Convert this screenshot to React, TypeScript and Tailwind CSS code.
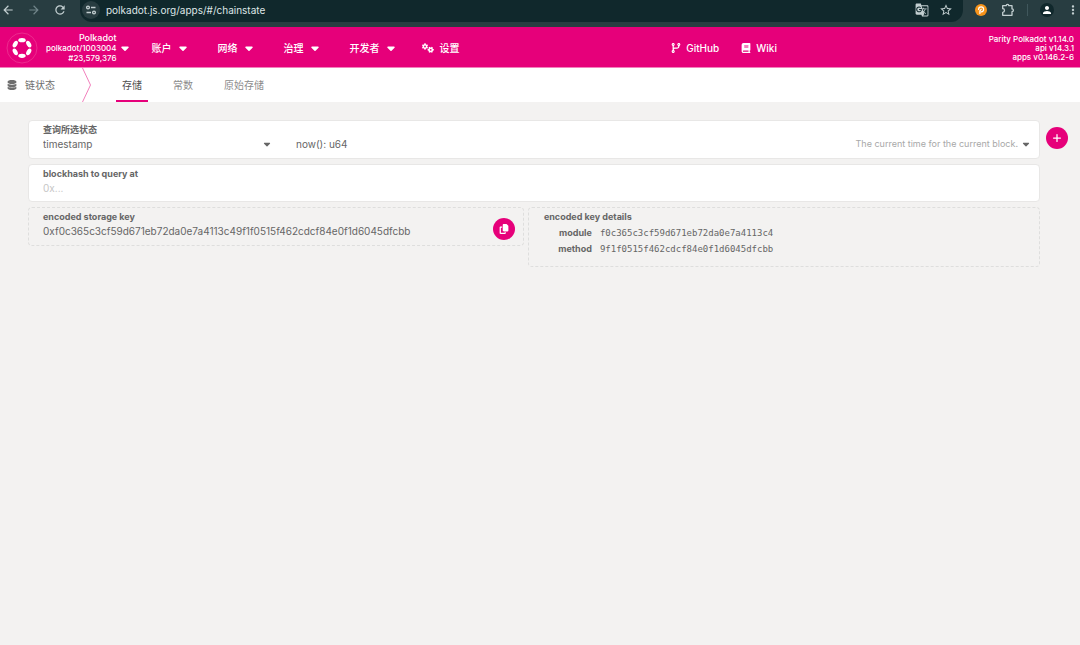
import { useState } from 'react';
import type { ReactNode } from 'react';
import { FaBook, FaCaretDown, FaCodeBranch, FaCopy, FaDatabase, FaGears, FaPlus } from 'react-icons/fa6';
import {
  MdArrowBack,
  MdArrowForward,
  MdGTranslate,
  MdMoreVert,
  MdPerson,
  MdRefresh,
  MdStarBorder,
} from 'react-icons/md';

const STORAGE_KEY = '0xf0c365c3cf59d671eb72da0e7a4113c49f1f0515f462cdcf84e0f1d6045dfcbb';

const MENUS = ['账户', '网络', '治理', '开发者'];
const TABS = ['存储', '常数', '原始存储'];

const KEY_DETAILS = [
  { name: 'module', value: 'f0c365c3cf59d671eb72da0e7a4113c4' },
  { name: 'method', value: '9f1f0515f462cdcf84e0f1d6045dfcbb' },
];

function TuneIcon() {
  return (
    <svg viewBox="0 0 12 12" className="size-3" fill="none" stroke="currentColor" strokeWidth="1.3">
      <circle cx="3" cy="3.5" r="1.4" />
      <path d="M6 3.5H10.500M1.500 8.5h4.5" />
      <circle cx="9" cy="8.5" r="1.4" />
    </svg>
  );
}

function PuzzleIcon() {
  return (
    <svg viewBox="0 0 14 14" className="size-3.5" fill="none" stroke="currentColor" strokeWidth="1.3" strokeLinejoin="round">
      <path d="M1.700 2.700H5.200a1.300 1.300 0 0 1 2.600 0H11v3.200a1.400 1.400 0 0 1 0 2.800V12.300H1.700V9.300a1.800 1.800 0 0 0 0-3.600z" />
    </svg>
  );
}

function WalletIcon() {
  return (
    <svg viewBox="0 0 12 12" className="size-3">
      <circle cx="6" cy="6" r="6" fill="#f7931a" />
      <path
        d="M3.600 5.400a2.500 2.500 0 1 1 2.600 2.500M4.900 9.500V6.800l1.300-1.500"
        fill="none"
        stroke="#fff"
        strokeWidth="1.200"
        strokeLinecap="round"
      />
    </svg>
  );
}

function PolkadotLogo() {
  const petals = [0, 60, 120, 180, 240, 300];

  return (
    <svg viewBox="0 0 32 32" className="size-8 shrink-0">
      <circle cx="16" cy="16" r="15" fill="none" stroke="#ee3d96" strokeWidth="0.7" />
      {petals.map((angle) => (
        <ellipse key={angle} cx="16" cy="8.2" rx="3.7" ry="2.1" fill="#fff" transform={`rotate(${angle} 16 16)`} />
      ))}
    </svg>
  );
}

function BrowserBar() {
  return (
    <div className="flex h-[27px] items-start bg-[#283d41] text-[#c3cfd1]">
      <div className="flex h-5 w-20 shrink-0 items-center gap-3 pl-px">
        <button type="button" aria-label="Back">
          <MdArrowBack className="size-3.5" />
        </button>
        <button type="button" aria-label="Forward" className="text-[#71858a]">
          <MdArrowForward className="size-3.5" />
        </button>
        <button type="button" aria-label="Reload">
          <MdRefresh className="size-3.5" />
        </button>
      </div>
      <div className="flex h-[22px] min-w-0 flex-1 items-center rounded-b-xl bg-[#10282c] px-0.5 pb-0.5">
        <button type="button" aria-label="Site information" className="flex size-[18px] items-center justify-center rounded-full bg-[#283d41]">
          <TuneIcon />
        </button>
        <input
          aria-label="Address"
          readOnly
          value="polkadot.js.org/apps/#/chainstate"
          className="ml-1.5 min-w-0 flex-1 bg-transparent text-[10px] text-[#dfe6e7] outline-none"
        />
        <button type="button" aria-label="Translate" className="mr-2.5">
          <MdGTranslate className="size-3.5" />
        </button>
        <button type="button" aria-label="Bookmark" className="mr-2">
          <MdStarBorder className="size-3.5" />
        </button>
      </div>
      <div className="flex h-5 shrink-0 items-center pl-3">
        <button type="button" aria-label="Wallet">
          <WalletIcon />
        </button>
        <button type="button" aria-label="Extensions" className="ml-3.5">
          <PuzzleIcon />
        </button>
        <span className="ml-3 h-3 w-px bg-[#40575c]" />
        <button type="button" aria-label="Profile" className="ml-3 flex size-3.5 items-center justify-center rounded-full bg-[#10282c] text-white">
          <MdPerson className="size-3" />
        </button>
        <button type="button" aria-label="Menu" className="ml-3">
          <MdMoreVert className="size-3.5" />
        </button>
      </div>
    </div>
  );
}

function Header() {
  return (
    <header className="flex h-[41px] items-center border-b border-[#f280bc] bg-[#e6007a] px-1.5 pt-0.5 text-white">
      <PolkadotLogo />
      <button type="button" className="ml-2 flex items-center gap-0.5 text-right text-[9px] leading-[10px]">
        <span>
          <span className="block font-medium">Polkadot</span>
          <span className="block text-[8px] font-medium">polkadot/1003004</span>
          <span className="block text-[8px] font-medium">#23,579,376</span>
        </span>
        <FaCaretDown className="size-3" />
      </button>
      <nav className="ml-[21px] flex items-center text-[10px] font-medium">
        {MENUS.map((menu) => (
          <button key={menu} type="button" className="mr-[29px] flex items-center gap-[5px]">
            {menu}
            <FaCaretDown className="size-3" />
          </button>
        ))}
        <a href="#/settings" className="-ml-1 flex items-center gap-1.5">
          <FaGears className="size-3" />
          设置
        </a>
      </nav>
      <nav className="mx-auto flex items-center gap-[22px] text-[10px] font-medium">
        <a href="#github" className="flex items-center gap-[5px]">
          <FaCodeBranch className="size-2.5" />
          GitHub
        </a>
        <a href="#wiki" className="flex items-center gap-[5px]">
          <FaBook className="size-2.5" />
          Wiki
        </a>
      </nav>
      <div className="text-right text-[8px] leading-[9px] font-medium">
        <div>Parity Polkadot v1.14.0</div>
        <div>api v14.3.1</div>
        <div>apps v0.146.2-6</div>
      </div>
    </header>
  );
}

interface TabsProps {
  active: string;
  onChange: (tab: string) => void;
}

function Tabs({ active, onChange }: TabsProps) {
  return (
    <nav className="flex h-[34px] items-stretch bg-white text-[10px] text-[#6e6e6e]">
      <div className="flex w-20 items-center gap-2 pl-[7px]">
        <FaDatabase className="size-2.5" />
        链状态
      </div>
      <svg viewBox="0 0 12 34" className="w-3 shrink-0" fill="none" stroke="#f280bc">
        <path d="M2.500 0L10.500 17L2.500 34" />
      </svg>
      <div className="ml-6 flex gap-[19px]">
        {TABS.map((tab) => (
          <button
            key={tab}
            type="button"
            onClick={() => onChange(tab)}
            className={
              tab === active
                ? 'border-y-2 border-t-transparent border-b-[#e6007a] px-1.5 text-[#4e4e4e]'
                : 'border-y-2 border-transparent px-1.5 text-[#8b8b8b]'
            }
          >
            {tab}
          </button>
        ))}
      </div>
    </nav>
  );
}

interface RoundButtonProps {
  label: string;
  children: ReactNode;
}

function RoundButton({ label, children }: RoundButtonProps) {
  return (
    <button
      type="button"
      aria-label={label}
      className="flex size-[22px] shrink-0 items-center justify-center rounded-full bg-[#e6007a] text-white"
    >
      {children}
    </button>
  );
}

/** Storage query form: pallet, entry and the optional block hash */
function QueryForm() {
  return (
    <div className="flex flex-col gap-[5px]">
      <div className="flex h-[39px] items-end rounded-sm border border-[#e8e7e6] bg-white pb-[7px] pl-3.5">
        <div className="w-[253px] shrink-0">
          <label htmlFor="pallet" className="block text-[9px] leading-[14px] font-bold">
            查询所选状态
          </label>
          <div className="flex items-center pr-6">
            <select id="pallet" className="h-[14px] flex-1 appearance-none text-[10px] leading-[14px] outline-none">
              <option>timestamp</option>
            </select>
            <FaCaretDown className="size-2.5" />
          </div>
        </div>
        <div className="flex flex-1 items-center pr-2">
          <select aria-label="storage entry" className="h-[14px] flex-1 appearance-none text-[10px] leading-[14px] outline-none">
            <option>now(): u64</option>
          </select>
          <span className="mr-[3px] text-[9px] leading-[14px] text-[#a8a8a8]">The current time for the current block.</span>
          <FaCaretDown className="size-2.5" />
        </div>
      </div>
      <div className="h-[38px] rounded-sm border border-[#e8e7e6] bg-white px-3.5 pt-0.5">
        <label htmlFor="blockhash" className="block text-[9px] leading-[14px] font-bold">
          blockhash to query at
        </label>
        <input
          id="blockhash"
          placeholder="0x..."
          className="block h-[14px] w-full text-[10px] leading-[14px] outline-none placeholder:text-[#c6c6c6]"
        />
      </div>
    </div>
  );
}

function EncodedKey() {
  return (
    <div className="mt-[5px] flex items-start gap-1">
      <div className="flex h-[39px] w-[49%] items-start rounded-sm border border-dashed border-[#dededd] pr-2 pl-3.5">
        <div className="min-w-0 flex-1 pt-0.5">
          <div className="text-[9px] leading-[14px] font-bold">encoded storage key</div>
          <div className="text-[10px] leading-[14px]">{STORAGE_KEY}</div>
        </div>
        <div className="pt-2.5">
          <RoundButton label="Copy storage key">
            <FaCopy className="size-2.5" />
          </RoundButton>
        </div>
      </div>
      <div className="h-[60px] flex-1 rounded-sm border border-dashed border-[#dededd] px-[15px] pt-0.5">
        <div className="text-[9px] leading-[14px] font-bold">encoded key details</div>
        <table className="mt-px leading-4">
          <tbody>
            {KEY_DETAILS.map((row) => (
              <tr key={row.name}>
                <th scope="row" className="w-12 p-0 text-right text-[9px] font-bold">
                  {row.name}
                </th>
                <td className="p-0 pl-2 font-['DejaVu_Sans_Mono',monospace] text-[9px]">{row.value}</td>
              </tr>
            ))}
          </tbody>
        </table>
      </div>
    </div>
  );
}

export default function App() {
  const [tab, setTab] = useState(TABS[0]);

  return (
    <div className="min-h-screen bg-[#f3f2f1] font-['Inter','Noto_Sans_CJK_SC',sans-serif] text-[#666]">
      <BrowserBar />
      <Header />
      <Tabs active={tab} onChange={setTab} />
      <main className="flex items-start gap-1.5 pt-[18px] pr-3 pl-7">
        <div className="min-w-0 flex-1">
          <QueryForm />
          <EncodedKey />
        </div>
        <div className="pt-[7px]">
          <RoundButton label="Add query">
            <FaPlus className="size-2.5" />
          </RoundButton>
        </div>
      </main>
    </div>
  );
}
